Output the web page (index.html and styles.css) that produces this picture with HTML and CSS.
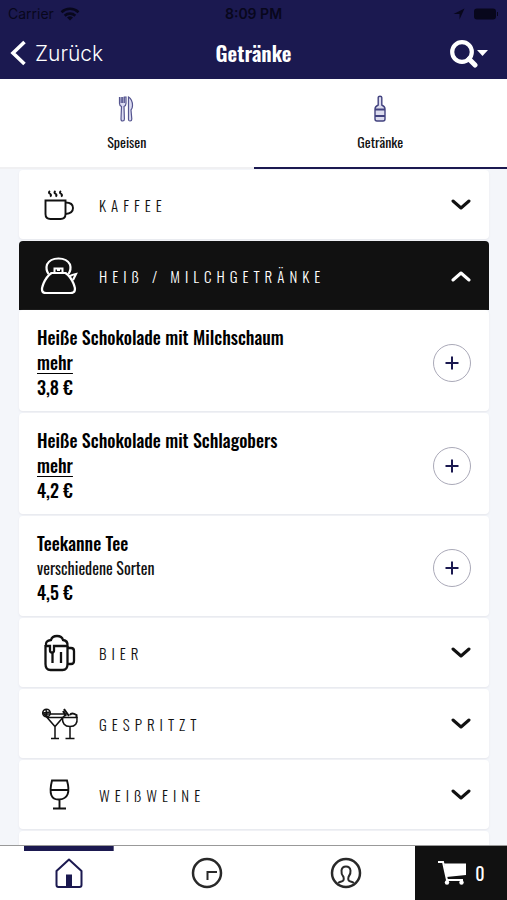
FILE: index.html
```html
<!DOCTYPE html>
<html lang="de">
<head>
<meta charset="utf-8">
<meta name="viewport" content="width=device-width, initial-scale=1">
<title>Getränke</title>
<link rel="stylesheet" href="styles.css">
</head>
<body>
<div class="app">
  <header class="header">
    <div class="status">
      <span class="status-side">Carrier
        <svg width="20" height="14" viewBox="0 0 20 14"><g fill="none" stroke="currentColor" stroke-width="2.6"><path d="M1.5 5.2a12.300 12.300 0 0 1 17 0"/><path d="M4.700 8.700a7.700 7.700 0 0 1 10.600 0"/></g><path d="M10 13.500 7 10.600a4.300 4.300 0 0 1 6 0z" fill="currentColor"/></svg>
      </span>
      <span class="status-time">8:09 PM</span>
      <span class="status-side status-right">
        <svg width="12" height="12" viewBox="0 0 12 12"><path d="M11.500.5 6.500 11.500V6H.5z" fill="currentColor"/></svg>
        <svg width="26" height="12" viewBox="0 0 26 12"><rect x="1" y=".5" width="22" height="11" rx="3" fill="currentColor"/><path d="M24.500 4v4" stroke="currentColor"/></svg>
      </span>
    </div>
    <div class="navbar">
      <a class="back" href="#">
        <svg width="17" height="28" viewBox="0 0 17 28"><path d="M14.500 3 3 14l11.500 11" fill="none" stroke="currentColor" stroke-width="3.600"/></svg>
        <span>Zurück</span>
      </a>
      <h1 class="title">Getränke</h1>
      <button class="search" type="button" aria-label="Suche">
        <svg width="40" height="30" viewBox="0 0 40 30"><circle cx="13" cy="14" r="9.800" fill="none" stroke="currentColor" stroke-width="4.200"/><path d="m20 21 6 6" stroke="currentColor" stroke-width="5" stroke-linecap="round"/><path d="M28 12h11l-5.500 6z" fill="currentColor"/></svg>
      </button>
    </div>
  </header>

  <nav class="tabs">
    <a class="tab" href="#">
      <svg width="24" height="28" viewBox="0 0 24 28" fill="#dcdcf2" stroke="#55558f" stroke-width="1.200"><path d="M4.500 2v6.500q0 2 2 3L6 24q0 2 1.700 2t1.700-2L9 11.500q2-1 2-3V2H9.300v6M7.700 2v6M6.200 8V2z"/><path d="M13.500 2q4 2.500 4 8.500 0 3-1.500 4.500l.8 9q0 2-1.700 2t-1.600-2z"/></svg>
      <span>Speisen</span>
    </a>
    <a class="tab tab-active" href="#">
      <svg width="24" height="28" viewBox="0 0 24 28" fill="#dcdcee" stroke="#42427f" stroke-width="1.400"><path d="M10.200 2.500q0-1.200 1.800-1.200t1.800 1.200V10q3.200 1.500 3.200 4v10q0 2-2 2H9q-2 0-2-2V14q0-2.500 3.200-4z"/><path d="M7 14.500h10M7 21h10" stroke-width="2"/></svg>
      <span>Getränke</span>
    </a>
  </nav>

  <main class="menu">
    <button class="category" type="button">
      <svg class="cat-icon" viewBox="0 0 40 40" fill="none" stroke="currentColor" stroke-width="1.900"><path d="M6.500 15.500h20V29q0 5-5 5h-10q-5 0-5-5z"/><path d="M26.500 17.500q7.500 0 7.500 5.500t-7.500 6"/><path d="M11 6q-2 1.400 0 2.800t0 2.700M16.500 6q-2 1.400 0 2.800t0 2.700M22 6q-2 1.400 0 2.800t0 2.700" stroke-width="2"/></svg>
      <span class="cat-name">KAFFEE</span>
      <svg class="chevron" viewBox="0 0 20 12"><path d="m2 2 8 7 8-7"/></svg>
    </button>

    <section>
      <button class="category category-open" type="button" aria-expanded="true">
        <svg class="cat-icon" viewBox="0 0 40 40" fill="none" stroke="currentColor" stroke-width="2.200"><path d="M9.500 18q-3-4.500-1.500-9.500 3-6 11.500-6T31 8.500q1.500 5-1.500 9.500"/><path d="M12.500 17h14q5 3.500 8 10.500 4 9.500-3 9.500H7q-6.500 0-2.500-9.500Q7.500 20.500 12.500 17z"/><path d="M30 20.500q3.500-2 7-2.500-1.500 3-3 6"/><path d="M15.500 16v-3.500h8V16M18 14h3" stroke-width="2"/></svg>
        <span class="cat-name">HEIß / MILCHGETRÄNKE</span>
        <svg class="chevron" viewBox="0 0 20 12"><path d="m2 10 8-7 8 7"/></svg>
      </button>
      <article class="item">
        <div class="item-text"><h2>Heiße Schokolade mit Milchschaum</h2><a class="more" href="#">mehr</a><p class="price">3,8 €</p></div>
        <button class="add" type="button" aria-label="Heiße Schokolade mit Milchschaum hinzufügen"><svg width="14" height="14" viewBox="0 0 14 14"><path d="M7 .5v13M.5 7h13"/></svg></button>
      </article>
      <article class="item">
        <div class="item-text"><h2>Heiße Schokolade mit Schlagobers</h2><a class="more" href="#">mehr</a><p class="price">4,2 €</p></div>
        <button class="add" type="button" aria-label="Heiße Schokolade mit Schlagobers hinzufügen"><svg width="14" height="14" viewBox="0 0 14 14"><path d="M7 .5v13M.5 7h13"/></svg></button>
      </article>
      <article class="item">
        <div class="item-text"><h2>Teekanne Tee</h2><p class="note">verschiedene Sorten</p><p class="price">4,5 €</p></div>
        <button class="add" type="button" aria-label="Teekanne Tee hinzufügen"><svg width="14" height="14" viewBox="0 0 14 14"><path d="M7 .5v13M.5 7h13"/></svg></button>
      </article>
    </section>

    <button class="category" type="button">
      <svg class="cat-icon" viewBox="0 0 40 40" fill="none" stroke="currentColor" stroke-width="2.300"><path d="M6.500 12v19q0 6 5 6h12q5 0 5-6V13M28.500 15H32q3 0 3 3v10q0 3-3 3h-3.500"/><path d="M7 13q-1-5.500 5-6 1-4 6-4t6 4q5 .5 4.500 6H15v4.500q0 2-2 2t-2-2V13H7"/><path d="M13.500 19v11M22 19v11"/></svg>
      <span class="cat-name">BIER</span>
      <svg class="chevron" viewBox="0 0 20 12"><path d="m2 2 8 7 8-7"/></svg>
    </button>
    <button class="category" type="button">
      <svg class="cat-icon" viewBox="0 0 40 40" fill="none" stroke="currentColor" stroke-width="1.500"><circle cx="7.500" cy="9" r="3.800"/><path d="m4 9 7-1M7 5.500 8 13" /><path d="M5 10h22L16 22.500zM8 13.500h15.500M16 22.500V34m-4 .5h8"/><path d="M23.500 13.500h14.500q1 9-7 9t-7.500-9zM31 22.500V34m-4.500.5h9"/><path d="M25 5l5 7M31 11q1.500-3 6.500 0V14M24 7l3 5" stroke-width="2"/></svg>
      <span class="cat-name">GESPRITZT</span>
      <svg class="chevron" viewBox="0 0 20 12"><path d="m2 2 8 7 8-7"/></svg>
    </button>
    <button class="category" type="button">
      <svg class="cat-icon" viewBox="0 0 40 40" fill="none" stroke="currentColor" stroke-width="1.900"><path d="M13 5.500h15q5 18-7.500 19T13 5.500zM11.500 15h18M20.500 24.500V33M14 33.500h13"/></svg>
      <span class="cat-name">WEIßWEINE</span>
      <svg class="chevron" viewBox="0 0 20 12"><path d="m2 2 8 7 8-7"/></svg>
    </button>
    <div class="category"></div>
  </main>

  <footer class="footer">
    <a class="foot-link foot-active" href="#" aria-label="Start"><svg width="32" height="34" viewBox="0 0 32 34"><path d="M3.500 15 16 3.500 28.500 15v14q0 2-2 2h-21q-2 0-2-2z" fill="none" stroke="currentColor" stroke-width="2" stroke-linejoin="round"/><path d="M13 18.500h6V31h-6z" fill="currentColor"/></svg></a>
    <a class="foot-link" href="#" aria-label="Verlauf"><svg width="32" height="32" viewBox="0 0 32 32" fill="none" stroke="currentColor"><circle cx="16" cy="16" r="14" stroke-width="2.500"/><path d="M26 15H16.500v8" stroke-width="2"/></svg></a>
    <a class="foot-link" href="#" aria-label="Profil"><svg width="32" height="32" viewBox="0 0 32 32" fill="none" stroke="currentColor"><circle cx="16" cy="16" r="14" stroke-width="2.500"/><path d="M8.500 26.500q0-1.500 3-2 3-.5 2-4.500-2.500-3-2-6.500.5-4 4.500-4t4.500 4q.5 3.500-2 6.500-1 4 2 4.500 3 .5 3 2" stroke-width="2"/></svg></a>
    <a class="cart" href="#" aria-label="Warenkorb, 0 Artikel"><svg width="30" height="26" viewBox="0 0 30 26"><path d="M7 3.500h22V15L9.500 17z" fill="currentColor"/><path d="M1 2h5l4 18h16" fill="none" stroke="currentColor" stroke-width="2"/><circle cx="10" cy="22.500" r="2.200" fill="currentColor"/><circle cx="24.500" cy="22.500" r="2.200" fill="currentColor"/></svg><span>0</span></a>
  </footer>
</div>
</body>
</html>
```
FILE: styles.css
```css
:root {
  --navy: #1b1950;
  --ink: #111;
  --condensed: "Oswald", "Liberation Sans Narrow", "Arial Narrow", "Liberation Sans", sans-serif;
}

* { box-sizing: border-box; }

body { margin: 0; font-family: var(--condensed); color: var(--ink); }
a { color: inherit; text-decoration: none; }
button { font: inherit; color: inherit; border: 0; background: none; padding: 0; }
h1, h2, p { margin: 0; }
svg { display: block; flex: none; }

.app { display: flex; flex-direction: column; height: 100vh; overflow: hidden; background: #f4f6fa; }

.header { background: var(--navy); flex: none; padding-bottom: 4px; }
.status {
  display: grid; grid-template-columns: 1fr auto 1fr; align-items: center;
  padding: 3px 8px; color: #08071c;
  font: 14px/21px Inter, "Liberation Sans", sans-serif;
}
.status-side { display: flex; align-items: center; gap: 6px; }
.status-right { justify-content: flex-end; gap: 8px; }
.status-time { font-weight: 600; }
.navbar {
  display: grid; grid-template-columns: 1fr auto 1fr; align-items: center;
  min-height: 48px; padding: 4px 10px 0; color: #fff;
}
.back { display: flex; align-items: center; gap: 8px; font: 300 21px Inter, "Liberation Sans", sans-serif; }
.title { font-size: 21px; font-weight: 600; line-height: 32px; }
.search { justify-self: end; padding-right: 8px; }

.tabs { display: flex; flex: none; background: #fff; min-height: 90px; }
.tab {
  flex: 1; display: flex; flex-direction: column; align-items: center; gap: 9px;
  padding-top: 16px; font-size: 14px; line-height: 20px; border-bottom: 2px solid #f0f0f2;
}
.tab-active { border-color: var(--navy); }

.menu { flex: 1; min-height: 0; overflow: hidden; padding: 1px 18px 0 19px; }
.category {
  display: flex; align-items: center; width: 100%; min-height: 69px; margin-bottom: 2px;
  padding: 0 18px 0 20px; background: #fff; border-radius: 4px; text-align: left;
  box-shadow: 0 1px 2px #e6e7ec;
}
.category-open { background: var(--ink); color: #fff; border-radius: 4px 4px 0 0; margin: 0; box-shadow: none; }
.cat-icon { width: 40px; height: 40px; }
.cat-name { flex: 1; padding-left: 20px; font-size: 15px; font-weight: 300; letter-spacing: 5px; }
.chevron { width: 20px; height: 12px; fill: none; stroke: currentColor; stroke-width: 3; stroke-linecap: round; stroke-linejoin: round; }

.item {
  display: flex; align-items: center; justify-content: space-between;
  margin-bottom: 2px; padding: 15px 18px 11px; background: #fff; border-radius: 4px;
  box-shadow: 0 1px 2px #e6e7ec;
}
.item h2, .more, .price { color: #000; font-size: 18px; font-weight: 500; line-height: 25px; }
.more { display: block; width: max-content; text-decoration: underline; text-decoration-thickness: 1px; text-underline-offset: 3px; }
.note { font-size: 16px; line-height: 24px; }
.add {
  display: grid; place-items: center; width: 38px; height: 38px;
  border: 1px solid #aaa9b8; border-radius: 50%; color: var(--navy);
}
.add path { stroke: currentColor; stroke-width: 2; }

.footer {
  flex: none; display: grid; grid-template-columns: 1fr 1fr 1fr 92px;
  min-height: 55px; background: #fff; border-top: 1px solid #999;
}
.foot-link { display: grid; place-items: center; color: #292929; }
.foot-active {
  color: var(--navy);
  background: linear-gradient(var(--navy), var(--navy)) center top / 65% 5px no-repeat;
}
.cart { display: flex; align-items: center; justify-content: center; gap: 8px; background: var(--ink); color: #fff; font-size: 18px; }
```
